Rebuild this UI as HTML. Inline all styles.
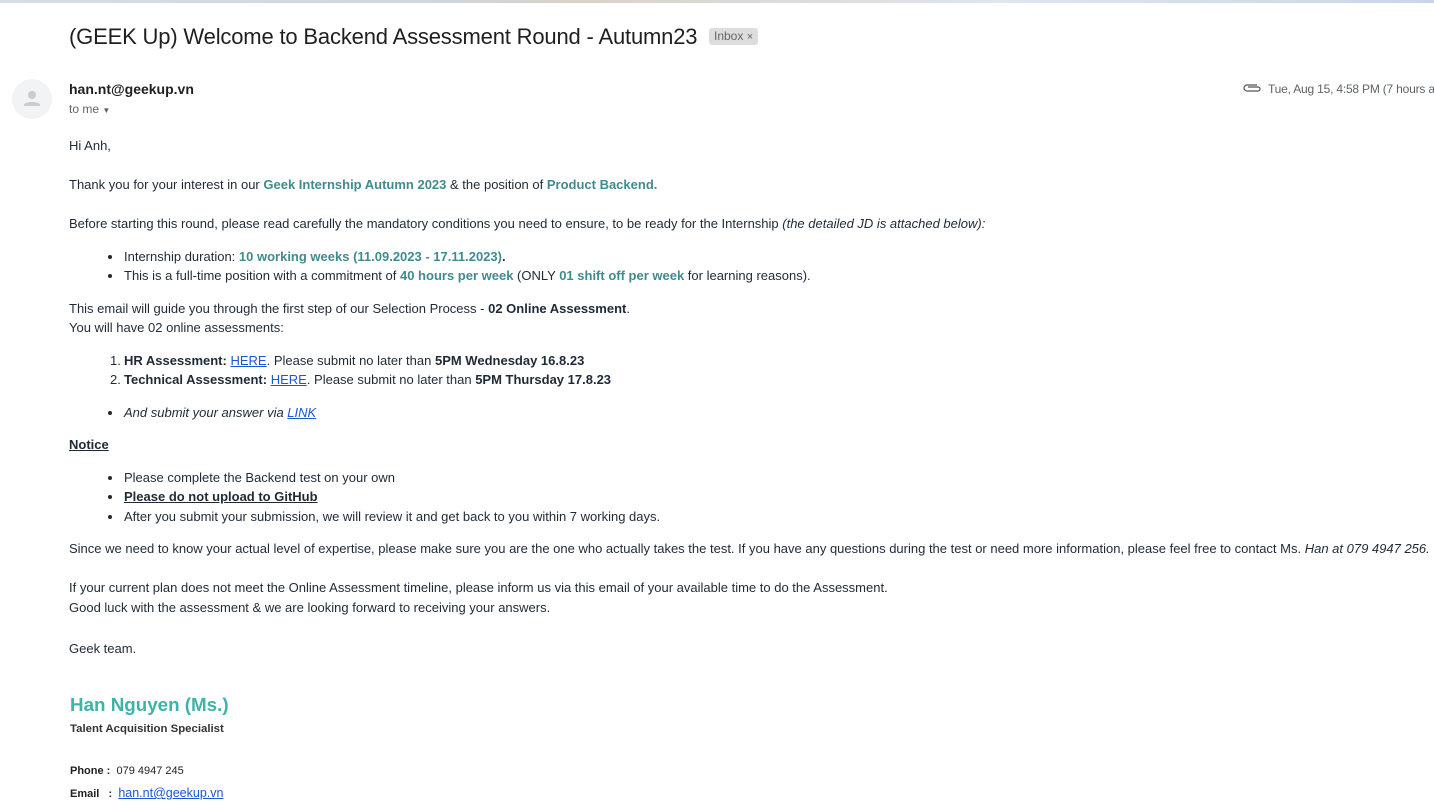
<!DOCTYPE html>
<html><head><meta charset="utf-8"><style>
body{margin:0;width:1434px;height:800px;overflow:hidden;background:#fff;font-family:"Liberation Sans",Arial,sans-serif;color:#222;position:relative}
.l{position:absolute;left:69px;font-size:13px;line-height:16px;color:#1f2a37;white-space:nowrap}
.t{color:#3f8b90;font-weight:bold}
a{color:#1a57d6;text-decoration:underline}
.li{left:124px}
.bul{position:absolute;left:108px;width:4px;height:4px;border-radius:50%;background:#1f2a37}
.num{position:absolute;left:110px;font-size:13px;line-height:16px;color:#1f2a37}
.sig{font-family:"Liberation Sans",Arial,sans-serif}
</style></head><body>
<div style="position:absolute;left:0;top:0;width:1434px;height:3px;background:linear-gradient(90deg,#d8dde3,#cfd7df 30%,#d9d2c8 40%,#dfe6ee 70%,#c9d6e6)"></div>
<div style="position:absolute;left:69px;top:23px;font-size:22px;line-height:28px;color:#1f1f1f;letter-spacing:-0.17px;white-space:nowrap">(GEEK Up) Welcome to Backend Assessment Round - Autumn23</div>
<div style="position:absolute;left:709px;top:28px;height:17px;padding:0 5px;background:#ddd;border-radius:3px;font-size:12px;line-height:17px;color:#666">Inbox <span style="font-size:11px">×</span></div>
<div style="position:absolute;left:12px;top:79px;width:40px;height:40px;border-radius:50%;background:#f1f3f4">
<svg width="40" height="40" viewBox="0 0 40 40"><circle cx="20" cy="16" r="4" fill="#ccc"/><path d="M12 26c0-4 16-4 16 0v1H12z" fill="#ccc"/></svg></div>
<div style="position:absolute;left:69px;top:80px;font-size:14px;font-weight:bold;color:#1f1f1f;line-height:18px">han.nt@geekup.vn</div>
<div style="position:absolute;left:69px;top:101px;font-size:12px;color:#5f6368;line-height:16px">to me <span style="font-size:8px">▼</span></div>
<svg style="position:absolute;left:1242px;top:82px" width="20" height="12" viewBox="0 0 20 12"><path d="M15 3H5a3 3 0 0 0 0 6h11a2 2 0 0 0 0-4H6" fill="none" stroke="#555" stroke-width="1.2"/></svg>
<div style="position:absolute;left:1268px;top:81px;font-size:12px;color:#5f6368;line-height:16px;white-space:nowrap;letter-spacing:-0.2px">Tue, Aug 15, 4:58 PM (7 hours ago)</div>

<div class="l" style="top:138px">Hi Anh,</div>
<div class="l" style="top:177px">Thank you for your interest in our <span class="t">Geek Internship Autumn 2023</span> &amp; the position of <span class="t">Product Backend.</span></div>
<div class="l" style="top:216px">Before starting this round, please read carefully the mandatory conditions you need to ensure, to be ready for the Internship <i>(the detailed JD is attached below):</i></div>
<div class="bul" style="top:255px"></div><div class="l li" style="top:249px">Internship duration: <span class="t">10 working weeks (11.09.2023 - 17.11.2023)</span><b>.</b></div>
<div class="bul" style="top:274px"></div><div class="l li" style="top:268px">This is a full-time position with a commitment of <span class="t">40 hours per week</span> (ONLY <span class="t">01 shift off per week</span> for learning reasons).</div>
<div class="l" style="top:301px">This email will guide you through the first step of our Selection Process - <b>02 Online Assessment</b>.</div>
<div class="l" style="top:320px">You will have 02 online assessments:</div>
<div class="num" style="top:353px">1.</div><div class="l li" style="top:353px"><b>HR Assessment:</b> <a>HERE</a>. Please submit no later than <b>5PM Wednesday 16.8.23</b></div>
<div class="num" style="top:372px">2.</div><div class="l li" style="top:372px"><b>Technical Assessment:</b> <a>HERE</a>. Please submit no later than <b>5PM Thursday 17.8.23</b></div>
<div class="bul" style="top:411px"></div><div class="l li" style="top:405px"><i>And submit your answer via <a>LINK</a></i></div>
<div class="l" style="top:437px"><b><u>Notice</u></b></div>
<div class="bul" style="top:476px"></div><div class="l li" style="top:470px">Please complete the Backend test on your own</div>
<div class="bul" style="top:495px"></div><div class="l li" style="top:489px"><b><u>Please do not upload to GitHub</u></b></div>
<div class="bul" style="top:515px"></div><div class="l li" style="top:509px">After you submit your submission, we will review it and get back to you within 7 working days.</div>
<div class="l" style="top:541px">Since we need to know your actual level of expertise, please make sure you are the one who actually takes the test. If you have any questions during the test or need more information, please feel free to contact Ms. <i>Han at 079 4947 256.</i></div>
<div class="l" style="top:580px">If your current plan does not meet the Online Assessment timeline, please inform us via this email of your available time to do the Assessment.</div>
<div class="l" style="top:600px">Good luck with the assessment &amp; we are looking forward to receiving your answers.</div>
<div class="l" style="top:641px">Geek team.</div>
<div class="l sig" style="left:70px;top:694px;font-size:18.8px;line-height:22px;font-weight:bold;color:#3bb5a8">Han Nguyen (Ms.)</div>
<div class="l sig" style="left:70px;top:721px;font-size:11.4px;font-weight:bold;color:#333">Talent Acquisition Specialist</div>
<div class="l sig" style="left:70px;top:763px;font-size:11px;color:#222"><b>Phone :</b>&nbsp; 079 4947 245</div>
<div class="l sig" style="left:70px;top:785px;font-size:11px;color:#222"><b>Email &nbsp; :</b>&nbsp; <a style="font-size:12.5px">han.nt@geekup.vn</a></div>
</body></html>
